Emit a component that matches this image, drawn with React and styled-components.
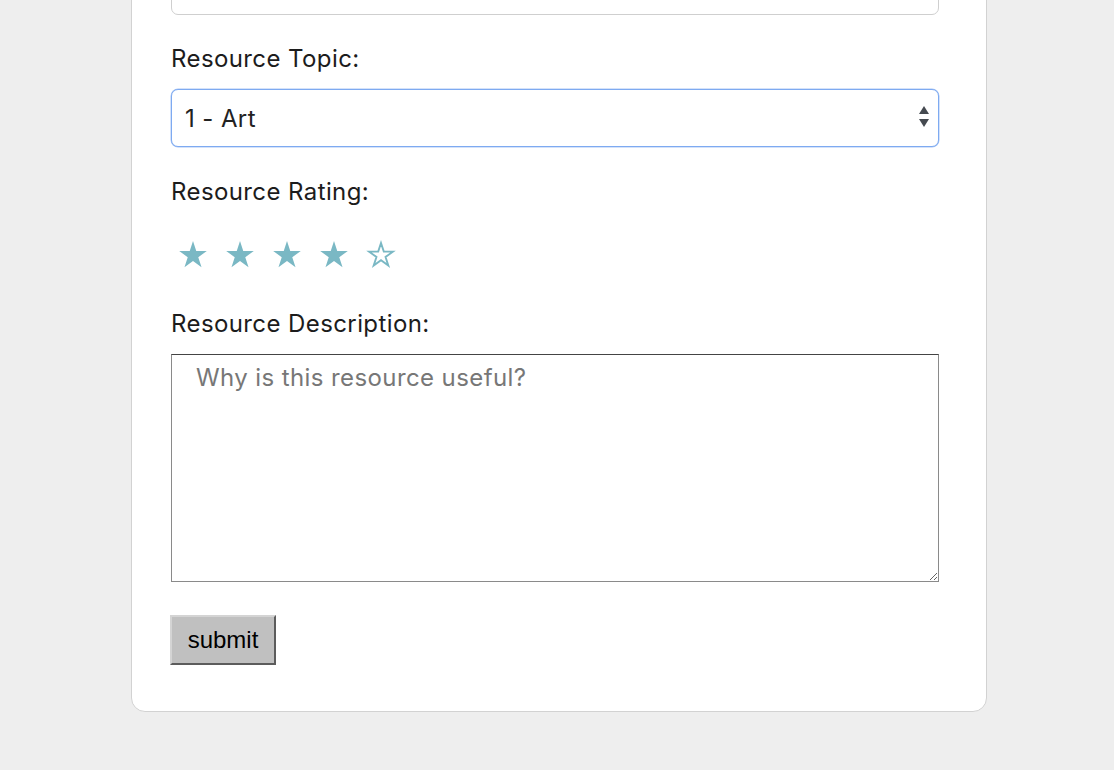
import React from "react";
import styled, { createGlobalStyle } from "styled-components";

const GlobalStyle = createGlobalStyle`
    html, body {
        margin: 0;
        padding: 0;
        background-color: #eeeeee;
        font-family: Inter, "Noto Sans", "Liberation Sans", sans-serif;
        overflow: hidden;
    }
`;

const Page = styled.div`
    display: flow-root;
    padding-left: 131px;
`;

const Card = styled.div`
    width: 856px;
    box-sizing: border-box;
    margin-top: -84px;
    padding: 40px 47px 46px 39px;
    background-color: #fff;
    border: 1px solid #d2d2d2;
    border-radius: 14px;
`;

const Field = styled.div`
    display: flex;
    flex-direction: column;
    margin-bottom: ${(props) => props.gap || 0}px;
`;

const Label = styled.label`
    font-size: 24px;
    line-height: 28px;
    letter-spacing: 0.4px;
    color: #1c1c1c;
    margin-bottom: ${(props) => props.gap || 16}px;
`;

const TextInput = styled.input`
    height: 58px;
    box-sizing: border-box;
    border: 1px solid #cfcfcf;
    border-radius: 7px;
    background: #fff;
`;

const SelectWrap = styled.div`
    position: relative;
`;

const Select = styled.select`
    appearance: none;
    width: 100%;
    height: 58px;
    box-sizing: border-box;
    padding: 0 13px;
    font-family: inherit;
    font-size: 24px;
    letter-spacing: 0.4px;
    color: #222;
    background: #fff;
    border: 1px solid #7eaaf1;
    box-shadow: 0 0 0 0.5px #a9c6f5;
    border-radius: 7px;
    outline: none;
`;

const Arrows = styled.svg`
    position: absolute;
    right: 9px;
    top: 16px;
    pointer-events: none;
`;

const Stars = styled.div`
    display: flex;
    align-items: center;
    height: 40px;
    gap: 17px;
    padding-left: 7px;
`;

const StarIcon = styled.svg`
    display: block;
    width: 30px;
    height: 30px;
`;

const STAR =
    "M15 1 L18.26 11.02 L28.79 11.02 L20.27 17.21 L23.52 27.23 L15 21.04 L6.48 27.23 L9.73 17.21 L1.21 11.02 L11.74 11.02 Z";

const Star = ({ filled }) => (
    <StarIcon viewBox="0 0 30 30">
        {filled ? (
            <path d={STAR} fill="#7ab8c4" />
        ) : (
            <path
                d={STAR}
                fill="#fff"
                stroke="#7ab8c4"
                strokeWidth="2.2"
                transform="translate(15 15.5) scale(0.86) translate(-15 -15.5)"
            />
        )}
    </StarIcon>
);

const TextArea = styled.textarea`
    height: 228px;
    box-sizing: border-box;
    padding: 8px 24px;
    font-family: inherit;
    font-size: 24px;
    line-height: 30px;
    letter-spacing: 0.4px;
    border: 1px solid #8a8a8a;
    border-top-color: #444;
    border-radius: 0;
    outline: none;
    &::placeholder {
        color: #777;
    }
`;

const Submit = styled.button`
    align-self: flex-start;
    margin-left: -1px;
    width: 106px;
    height: 50px;
    font-family: "Liberation Sans", Arial, sans-serif;
    font-size: 24px;
    color: #000;
    background-color: #c0c0c0;
    border: 2px solid;
    border-color: #d4d4d4 #5c5c5c #5c5c5c #d4d4d4;
    padding: 0;
`;

const ratings = [true, true, true, true, false];

const App = () => {
    return (
        <>
            <GlobalStyle />
            <Page>
                <Card>
                    <Field gap={30}>
                        <TextInput type="text" />
                    </Field>
                    <Field gap={31}>
                        <Label gap={16}>Resource Topic:</Label>
                        <SelectWrap>
                            <Select defaultValue="1">
                                <option value="1">1 - Art</option>
                                <option value="2">2 - Science</option>
                            </Select>
                            <Arrows width="12" height="24" viewBox="0 0 12 24">
                                <path d="M6 1 L11 9 L1 9 Z" fill="#454a50" />
                                <path d="M1 14 L11 14 L6 22 Z" fill="#454a50" />
                            </Arrows>
                        </SelectWrap>
                    </Field>
                    <Field gap={35}>
                        <Label gap={29}>Resource Rating:</Label>
                        <Stars>
                            {ratings.map((filled, i) => (
                                <Star key={i} filled={filled} />
                            ))}
                        </Stars>
                    </Field>
                    <Field gap={33}>
                        <Label gap={16}>Resource Description:</Label>
                        <TextArea placeholder="Why is this resource useful?" />
                    </Field>
                    <Field>
                        <Submit type="submit">submit</Submit>
                    </Field>
                </Card>
            </Page>
        </>
    );
};

export default App;
